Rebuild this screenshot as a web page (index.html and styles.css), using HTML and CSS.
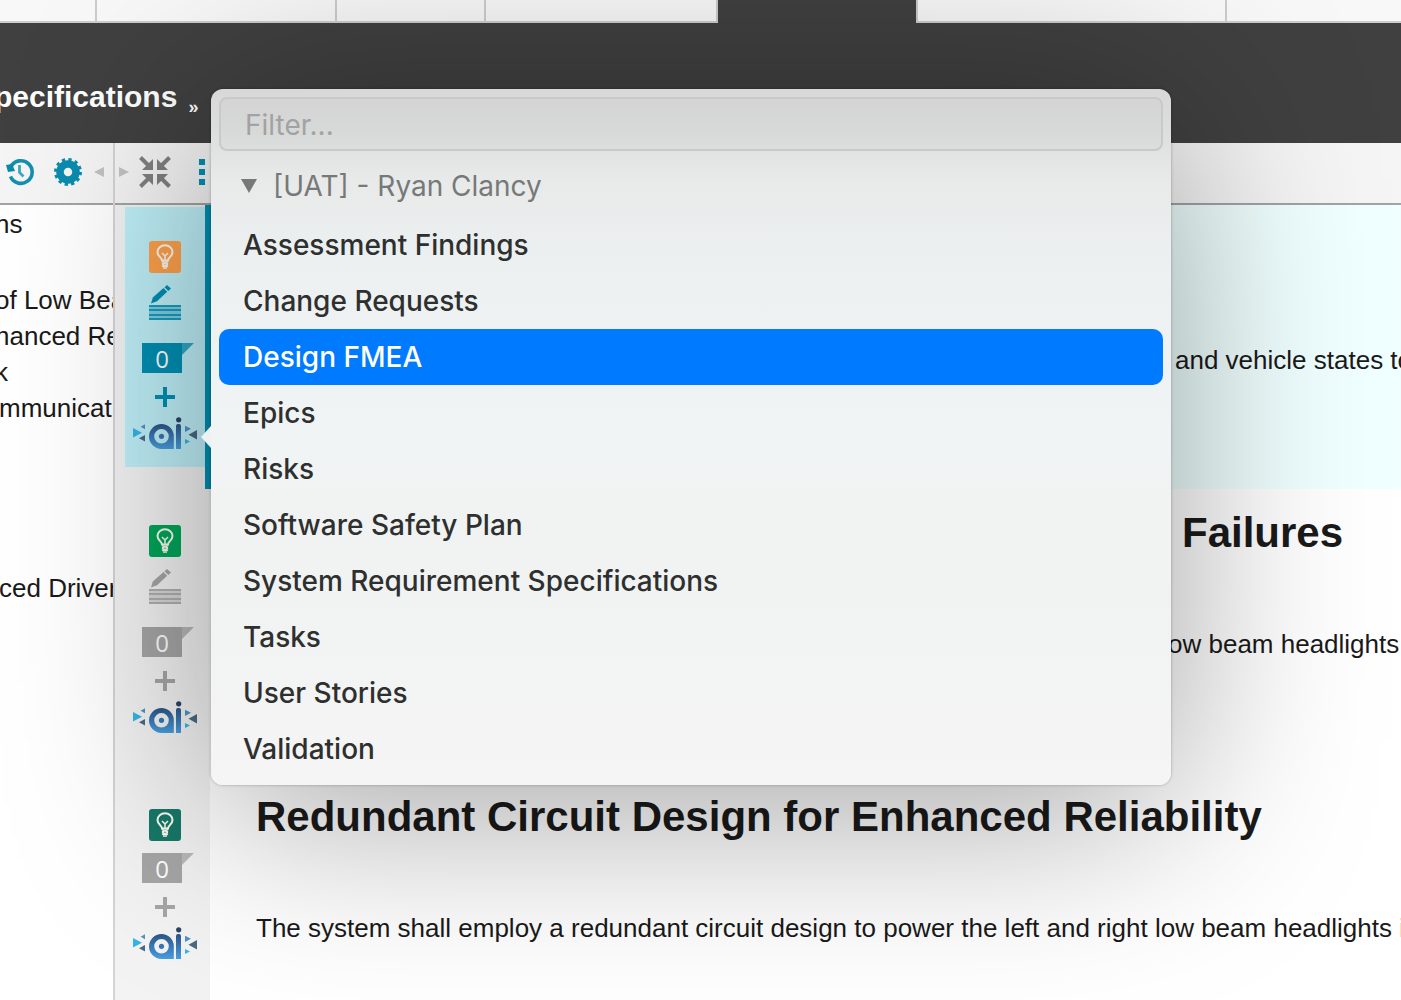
FILE: index.html
```html
<!DOCTYPE html>
<html lang="en">
<head>
    <meta charset="UTF-8">
    <meta name="viewport" content="width=device-width, initial-scale=1.0">
    <title>Specifications</title>
    <link rel="stylesheet" href="styles.css">
</head>
<body>

<!-- Shared icons -->
<svg class="icon-defs" width="0" height="0" aria-hidden="true">
    <defs>
        <linearGradient id="ai-blue" x1="0" y1="0" x2="0" y2="33" gradientUnits="userSpaceOnUse">
            <stop offset="0.1" stop-color="#2a4a74"/>
            <stop offset="0.6" stop-color="#3a7ab8"/>
            <stop offset="1" stop-color="#4aa2e2"/>
        </linearGradient>
        <symbol id="icon-bulb" viewBox="0 0 32 32">
            <path d="M13 19.5c0-3-4.500-4-4.500-8.500a7.500 6.800 0 0 1 15 0c0 4.500-4.500 5.500-4.500 8.500z" fill="none" stroke="currentColor" stroke-width="2"/>
            <path d="M13 12l2.500 2.500h1L19 12M16 14.500V19" fill="none" stroke="currentColor" stroke-width="1.500"/>
            <path d="M13 20.500l6 2.500M19 20.500l-6 2.500M13 23.500l6 2M19 23.500l-6 2M14 27h4" fill="none" stroke="currentColor" stroke-width="1.600"/>
        </symbol>
        <symbol id="icon-edit" viewBox="0 0 32 36">
            <path d="M2 18.500l1.800-6L14.500 3l3.700 3.700L8 16.300z" fill="currentColor"/>
            <path d="M15.500 2.200L18 0l4 3.600-2.700 2.300z" fill="currentColor"/>
            <path d="M0 20h32v15H0z" fill="currentColor" opacity="0.350"/>
            <path d="M0 20h32v2H0zM0 24h32v2H0zM0 29h32v2H0zM0 33h32v2H0z" fill="currentColor" opacity="0.800"/>
        </symbol>
        <symbol id="icon-badge" viewBox="0 0 52 30">
            <path d="M0 0h40v30H0z" fill="currentColor"/>
            <path d="M40 0h12L40 12z" fill="currentColor" opacity="0.750"/>
        </symbol>
        <symbol id="icon-plus" viewBox="0 0 20 20">
            <path d="M8 0h4v8h8v4h-8v8H8v-8H0V8h8z" fill="currentColor"/>
        </symbol>
        <symbol id="icon-ai" viewBox="0 0 64 33">
            <path d="M0 11l9 4.700L0 20.500z" fill="#35b4e8"/>
            <path d="M12 7.300v5L7.600 9.800z" fill="#4f92c4"/>
            <path d="M12 18v6.500l-6-3.200z" fill="#4a6a84"/>
            <path fill-rule="evenodd" d="M28.500 7a12.300 12.300 0 0 1 12.300 12.300V32H28.500a12.300 12.300 0 0 1 0-25zM28.500 12a7.300 7.300 0 1 0 0 14.600a7.300 7.300 0 0 0 0-14.600z" fill="url(#ai-blue)"/>
            <circle cx="28.500" cy="19.300" r="2.600" fill="#3577b4"/>
            <path d="M43 9a2 2 0 0 1 2-2h1a2 2 0 0 1 2 2v23h-5z" fill="url(#ai-blue)"/>
            <circle cx="45.700" cy="2.800" r="2.600" fill="#2b4468"/>
            <path d="M52 8.700l6 3-6 3.300z" fill="#4f92c4"/>
            <path d="M64 13v9.500l-8.500-4.800z" fill="#4a6a84"/>
            <path d="M52 22l5 2.500-5 2.500z" fill="#35b4e8"/>
        </symbol>
    </defs>
</svg>

<!-- Tab strip -->
<div class="tab-strip">
    <div class="tab tab-xs"></div>
    <div class="tab tab-lg"></div>
    <div class="tab tab-sm"></div>
    <div class="tab tab-md"></div>
    <div class="tab-gap"></div>
    <div class="tab tab-first tab-xl"></div>
    <div class="tab tab-rest"></div>
</div>

<header class="page-header">
    <h1>pecifications</h1>
    <span class="crumb">»</span>
</header>

<main class="workspace">
    <!-- Outline tree -->
    <aside class="outline">
        <div class="toolbar">
            <button class="tool" aria-label="History">
                <svg width="28" height="28" viewBox="0 0 28 28">
                    <path d="M5 8.500A11.300 11.300 0 1 1 4.500 18.500" fill="none" stroke="#1490b0" stroke-width="3.600"/>
                    <path d="M0 7l2 7 7-1-3-7z" fill="#0a8aac"/>
                    <path d="M13.500 7v7.500l4 4" fill="none" stroke="#3fa6c0" stroke-width="2.800"/>
                </svg>
            </button>
            <button class="tool" aria-label="Settings">
                <svg width="28" height="28" viewBox="0 0 28 28">
                    <circle cx="14" cy="14" r="8" fill="none" stroke="#0a8cb0" stroke-width="7.500"/>
                    <circle cx="14" cy="14" r="12.500" fill="none" stroke="#0a8cb0" stroke-width="3" stroke-dasharray="3.300 3.240"/>
                </svg>
            </button>
            <button class="tool collapse" aria-label="Collapse panel">
                <svg width="10" height="10" viewBox="0 0 10 10"><path d="M10 0v10L0 5z" fill="#c2c2c2"/></svg>
            </button>
        </div>
        <ul class="tree">
            <li class="tree-title">ns</li>
            <li>&nbsp;</li>
            <li>of Low Beam</li>
            <li>hanced Rel</li>
            <li>k</li>
            <li class="nested">mmunicat</li>
            <li>&nbsp;</li>
            <li>&nbsp;</li>
            <li>&nbsp;</li>
            <li>&nbsp;</li>
            <li class="nested">ced Driver</li>
        </ul>
    </aside>

    <!-- Document items -->
    <section class="document">
        <div class="toolbar">
            <button class="tool expand" aria-label="Expand panel">
                <svg width="10" height="10" viewBox="0 0 10 10"><path d="M0 0v10l10-5z" fill="#c2c2c2"/></svg>
            </button>
            <button class="tool" aria-label="Compress">
                <svg width="32" height="32" viewBox="0 0 32 32">
                    <path d="M14 3v11H3zM18 3v11h11zM14 29V18H3zM18 29V18h11z" fill="#808080"/>
                    <path d="M1.500 1.500L9 9M30.500 1.500L23 9M1.500 30.500L9 23M30.500 30.500L23 23" stroke="#808080" stroke-width="4"/>
                </svg>
            </button>
            <button class="tool more" aria-label="More">
                <svg width="6" height="26" viewBox="0 0 6 26"><path d="M0 0h6v6H0zM0 10h6v6H0zM0 20h6v6H0z" fill="#0090b4"/></svg>
            </button>
        </div>

        <article class="item active">
            <div class="gutter">
                <div class="actions">
                    <button class="bulb orange" aria-label="Status"><svg width="32" height="32"><use href="#icon-bulb"/></svg></button>
                    <button class="edit" aria-label="Edit"><svg width="32" height="36"><use href="#icon-edit"/></svg></button>
                    <button class="badge"><svg width="52" height="30"><use href="#icon-badge"/></svg><span>0</span></button>
                    <button class="add" aria-label="Add"><svg width="20" height="20"><use href="#icon-plus"/></svg></button>
                    <button class="ai" aria-label="AI"><svg width="64" height="33"><use href="#icon-ai"/></svg></button>
                </div>
            </div>
            <div class="content">
                <p class="tail">and vehicle states to</p>
            </div>
        </article>

        <article class="item">
            <div class="gutter">
                <div class="actions">
                    <button class="bulb green" aria-label="Status"><svg width="32" height="32"><use href="#icon-bulb"/></svg></button>
                    <button class="edit" aria-label="Edit"><svg width="32" height="36"><use href="#icon-edit"/></svg></button>
                    <button class="badge"><svg width="52" height="30"><use href="#icon-badge"/></svg><span>0</span></button>
                    <button class="add" aria-label="Add"><svg width="20" height="20"><use href="#icon-plus"/></svg></button>
                    <button class="ai" aria-label="AI"><svg width="64" height="33"><use href="#icon-ai"/></svg></button>
                </div>
            </div>
            <div class="content">
                <h2 class="tail">Failures</h2>
                <p class="tail tail-under">ow beam headlights</p>
            </div>
        </article>

        <article class="item">
            <div class="gutter">
                <div class="actions">
                    <button class="bulb teal" aria-label="Status"><svg width="32" height="32"><use href="#icon-bulb"/></svg></button>
                    <button class="badge"><svg width="52" height="30"><use href="#icon-badge"/></svg><span>0</span></button>
                    <button class="add" aria-label="Add"><svg width="20" height="20"><use href="#icon-plus"/></svg></button>
                    <button class="ai" aria-label="AI"><svg width="64" height="33"><use href="#icon-ai"/></svg></button>
                </div>
            </div>
            <div class="content">
                <h2>Redundant Circuit Design for Enhanced Reliability</h2>
                <p>The system shall employ a redundant circuit design to power the left and right low beam headlights i</p>
            </div>
        </article>
    </section>
</main>

<!-- Tracker picker -->
<div class="popover">
    <input type="text" class="filter" placeholder="Filter..." aria-label="Filter">
    <button class="group">
        <svg width="16" height="14" viewBox="0 0 16 14"><path d="M0 0h16L8 14z" fill="currentColor"/></svg>
        [UAT] - Ryan Clancy
    </button>
    <button class="option">Assessment Findings</button>
    <button class="option">Change Requests</button>
    <button class="option selected">Design FMEA</button>
    <button class="option">Epics</button>
    <button class="option">Risks</button>
    <button class="option">Software Safety Plan</button>
    <button class="option">System Requirement Specifications</button>
    <button class="option">Tasks</button>
    <button class="option">User Stories</button>
    <button class="option">Validation</button>
</div>

</body>
</html>
```
FILE: styles.css
```css
* {
    box-sizing: border-box;
}
body {
    font-family: "Liberation Sans", Arial, sans-serif;
    font-size: 26px;
    line-height: 36px;
    color: #1a1a1a;
    background-color: #ffffff;
    display: flex;
    flex-direction: column;
    height: 100vh;
    margin: 0;
    overflow: hidden;
    position: relative;
}
button {
    display: block;
    padding: 0;
    border: none;
    background: none;
    font: inherit;
    color: inherit;
    cursor: pointer;
}
svg {
    display: block;
}
.icon-defs {
    position: absolute;
}

/* Tab strip */
.tab-strip {
    display: flex;
    flex: none;
    height: 23px;
    background-color: #404040;
}
.tab {
    flex: none;
    background-color: #f8f8f8;
    border-right: 2px solid #cccccc;
    border-bottom: 2px solid #cccccc;
}
.tab-first {
    border-left: 2px solid #cccccc;
}
.tab-xs {
    width: 97px;
}
.tab-sm {
    width: 149px;
}
.tab-md {
    width: 232px;
}
.tab-lg {
    width: 240px;
}
.tab-xl {
    width: 311px;
}
.tab-gap {
    width: 198px;
}
.tab-rest {
    flex: 1;
    border-right: none;
}

/* Header */
.page-header {
    display: flex;
    flex: none;
    gap: 11px;
    height: 120px;
    padding-top: 56px;
    background-color: #404040;
    color: #ffffff;
}
.page-header h1 {
    margin: 0 0 0 -6px;
    font-size: 30px;
    line-height: 36px;
}
.crumb {
    padding-top: 12px;
    font-size: 18px;
    line-height: 32px;
    font-weight: bold;
}

/* Workspace */
.workspace {
    display: grid;
    grid-template-columns: 113px 1fr;
    flex: 1;
    min-height: 0;
}
.toolbar {
    display: flex;
    align-items: center;
    height: 62px;
    padding-bottom: 2px;
    border-bottom: 2px solid #a3a3a3;
    background-color: #f5f5f5;
}
.outline {
    overflow: hidden;
}
.outline .toolbar {
    gap: 20px;
    padding-left: 6px;
}
.outline .collapse {
    margin-left: -8px;
}
.document {
    border-left: 2px solid #d4d4d4;
    min-width: 0;
    overflow: hidden;
}
.document .toolbar {
    gap: 10px;
    padding-left: 4px;
}
.document .more {
    margin-left: 18px;
}
.tree {
    list-style: none;
    margin: 0 0 0 -5px;
    padding: 1px 0 0;
    white-space: nowrap;
}
.tree-title {
    margin-bottom: 4px;
}
.tree .nested {
    padding-left: 4px;
}

/* Items */
.item {
    display: grid;
    grid-template-columns: 95px 1fr;
    min-height: 284px;
}
.gutter {
    display: flex;
    align-items: flex-start;
    padding: 2px 0 0 10px;
    background-color: #f3f3f3;
}
.actions {
    display: flex;
    flex-direction: column;
    align-items: center;
    width: 80px;
    height: 260px;
    padding-top: 34px;
    color: #a6a6a6;
}
.active .gutter {
    border-right: 5px solid #0090b4;
}
.active .actions {
    background-color: #bff0f9;
    color: #0090b4;
}
.bulb {
    margin-bottom: 12px;
    border-radius: 3px;
    color: #fafaf0;
}
.orange {
    background-color: #ffa24c;
}
.green {
    background-color: #00a65a;
}
.teal {
    background-color: #187868;
}
.edit {
    margin-bottom: 22px;
}
.badge {
    display: grid;
    margin: 0 0 14px 6px;
}
.badge svg,
.badge span {
    grid-area: 1 / 1;
}
.badge span {
    width: 40px;
    height: 30px;
    font-family: "Open Sans", sans-serif;
    font-size: 24px;
    font-weight: 500;
    line-height: 32px;
    color: #ffffff;
}
.add {
    margin-bottom: 10px;
}
.content {
    display: grid;
    grid-template-rows: 56px 36px;
    row-gap: 65px;
    min-width: 0;
    padding: 16px 0 0 46px;
    overflow: hidden;
    white-space: nowrap;
}
.active .content {
    border-left: 1px solid #0090b4;
    background-color: #f0ffff;
}
.content h2 {
    grid-row: 1;
    margin: 0;
    font-size: 42px;
    line-height: 56px;
}
.content p {
    grid-row: 2;
    margin: 0;
}
/* Lines that run out from behind the popover */
.content .tail {
    padding-left: 918px;
}
.content .tail-under {
    padding-left: 912px;
}
.content h2.tail {
    padding-left: 926px;
}

/* Popover */
.popover {
    position: absolute;
    top: 89px;
    left: 211px;
    right: 230px;
    padding: 8px;
    border-radius: 12px;
    background: linear-gradient(#d8d8d8 0, #dcdddd 40px, #e8eaea 90px, #edf0f0 170px, #f1f4f4 350px, #f1f2f2 500px, #f5f5f5 100%);
    box-shadow: 0 0 3px rgba(0, 0, 0, 0.3), 0 22px 200px rgba(0, 0, 0, 0.38);
    font-family: Inter, sans-serif;
    font-size: 28px;
    color: #2e3030;
}
.popover::before {
    content: "";
    position: absolute;
    top: 337px;
    left: -10px;
    border: 11px solid transparent;
    border-left-width: 0;
    border-right: 10px solid #edf2f3;
}
.filter {
    display: block;
    width: 100%;
    height: 54px;
    padding: 2px 24px 0;
    border: 2px solid #c9c9c9;
    border-radius: 8px;
    background: rgba(0, 0, 0, 0.02);
    font: inherit;
    color: inherit;
}
.filter::placeholder {
    color: #a2a2a2;
}
.group {
    display: flex;
    align-items: center;
    gap: 16px;
    width: 100%;
    height: 66px;
    padding: 4px 22px 0;
    color: #777979;
}
.option {
    width: 100%;
    height: 56px;
    padding: 0 24px;
    border-radius: 10px;
    font-weight: 500;
    text-align: left;
}
.selected {
    background-color: #007aff;
    color: #ffffff;
}
```
